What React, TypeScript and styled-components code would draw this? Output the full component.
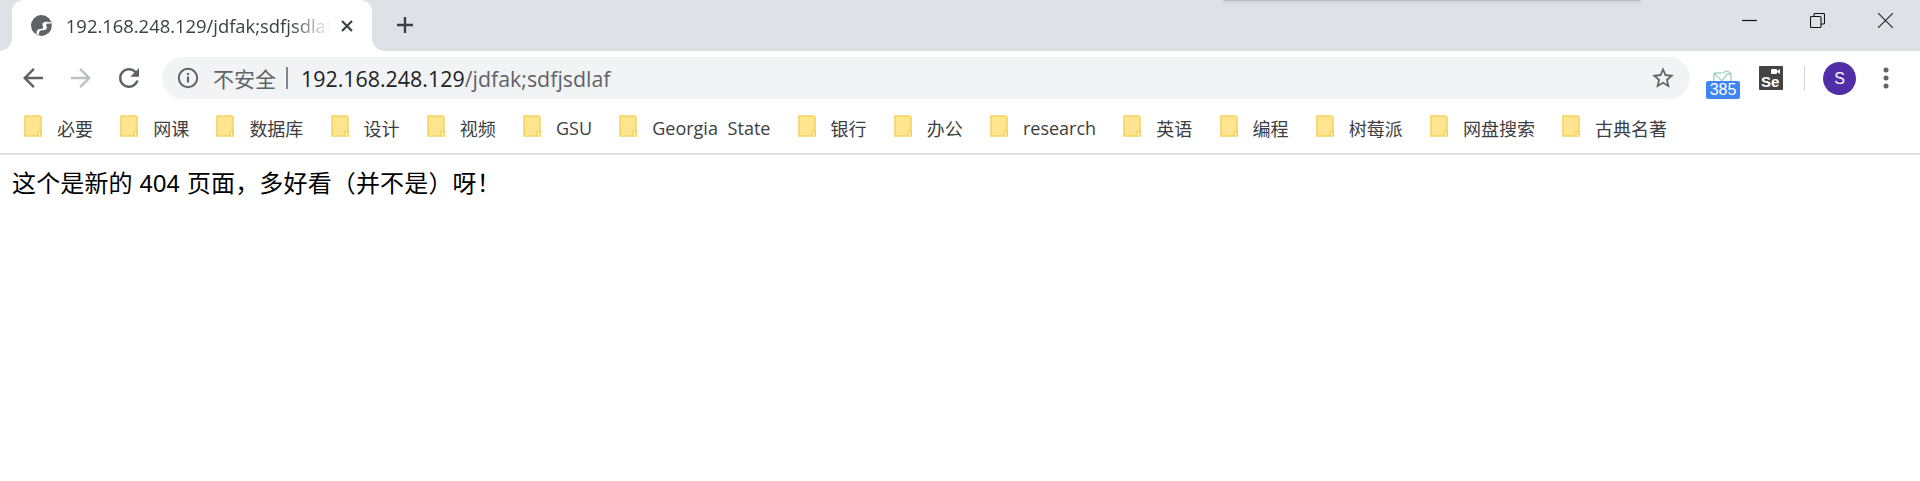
import styled, { createGlobalStyle } from "styled-components";

const GlobalStyle = createGlobalStyle`
  html, body {
    margin: 0;
    padding: 0;
    background: #fff;
  }
  body {
    font-family: "Open Sans", "Noto Sans CJK SC", sans-serif;
  }
`;

const marcadores = [
  "必要", "网课", "数据库", "设计", "视频", "GSU", "Georgia State", "银行", "办公",
  "research", "英语", "编程", "树莓派", "网盘搜索", "古典名著",
];

const Janela = styled.div`
  width: 1920px;
  height: 481px;
  overflow: hidden;
`;

const BarraTitulo = styled.div`
  position: relative;
  height: 51px;
  background: #dee1e6;
  display: flex;
  padding-left: 12px;
`;

const SombraJanela = styled.div`
  position: absolute;
  top: 0;
  left: 1224px;
  width: 416px;
  height: 1px;
  background: #b9bbc0;
  box-shadow: 0 0 4px 1px #c6c8cd;
`;

const Aba = styled.div`
  position: relative;
  width: 360px;
  height: 51px;
  background: #fff;
  border-radius: 12px 12px 0 0;
  display: flex;
  align-items: center;
  padding: 0 18px 0 19px;
  box-sizing: border-box;

  &::before,
  &::after {
    content: "";
    position: absolute;
    bottom: 0;
    width: 12px;
    height: 12px;
  }
  &::before {
    left: -12px;
    background: radial-gradient(circle at 0 0, #dee1e6 11.5px, #fff 12px);
  }
  &::after {
    right: -12px;
    background: radial-gradient(circle at 100% 0, #dee1e6 11.5px, #fff 12px);
  }
`;

const TituloAba = styled.span`
  margin-left: 14px;
  width: 268px;
  font-size: 18.4px;
  color: #3c4043;
  white-space: nowrap;
  overflow: hidden;
  -webkit-mask-image: linear-gradient(to right, #000 225px, transparent 264px);
  mask-image: linear-gradient(to right, #000 225px, transparent 264px);
`;

const FecharAba = styled.svg`
  margin-left: 8px;
  flex: none;
`;

const NovaAba = styled.svg`
  margin: 16px 0 0 24px;
  flex: none;
`;

const ControlesJanela = styled.div`
  margin-left: auto;
  display: flex;
  height: 41px;
  padding-right: 27px;
  gap: 53px;
  align-items: center;
`;

const BarraFerramentas = styled.div`
  height: 54px;
  background: #fff;
  display: flex;
  align-items: center;
  padding-left: 18px;
  gap: 18px;
`;

const BotaoNav = styled.svg`
  flex: none;
`;

const Endereco = styled.div`
  width: 1528px;
  height: 42px;
  border-radius: 21px;
  background: #f1f3f4;
  display: flex;
  align-items: center;
  padding: 0 14px 0 15px;
  box-sizing: border-box;
  flex: none;
`;

const NaoSeguro = styled.span`
  margin-left: 14px;
  font-size: 21px;
  color: #5f6368;
`;

const Separador = styled.span`
  width: 2px;
  height: 22px;
  margin: 0 13px 0 10px;
  background: #80868b;
`;

const Url = styled.span`
  font-size: 21.4px;
  color: #5f6368;
  white-space: nowrap;
`;

const Host = styled.span`
  color: #202124;
`;

const Estrela = styled.svg`
  margin-left: auto;
`;

const Extensoes = styled.div`
  display: flex;
  align-items: center;
  margin-left: -2px;
`;

const ExtensaoEmail = styled.div`
  width: 34px;
  height: 29px;
  margin-top: 12px;
  display: flex;
  flex-direction: column;
  align-items: center;
`;

const Contador = styled.span`
  width: 34px;
  height: 18px;
  border-radius: 2px;
  background: #3f85f4;
  color: #fff;
  font: 16px/18px "Liberation Sans", sans-serif;
  text-align: center;
`;

const ExtensaoSe = styled.div`
  position: relative;
  width: 24px;
  height: 24px;
  margin-left: 19px;
  background: #444;
  border-radius: 1px;
  color: #fff;
  font: bold 15px/17px "Liberation Sans", sans-serif;
  display: flex;
  align-items: flex-end;
  padding-left: 2px;
  box-sizing: border-box;
`;

const CameraSe = styled.svg`
  position: absolute;
  top: 3px;
  right: 3px;
`;

const Divisor = styled.div`
  width: 1px;
  height: 24px;
  margin: 0 18px 0 21px;
  background: #d3d5d8;
`;

const Avatar = styled.div`
  width: 33px;
  height: 33px;
  border-radius: 50%;
  background: #512da8;
  color: #fff;
  font: 16px/33px "Liberation Sans", sans-serif;
  text-align: center;
`;

const Pontos = styled.svg`
  margin-left: 27px;
`;

const BarraMarcadores = styled.div`
  height: 50px;
  display: flex;
  align-items: center;
  padding: 0 0 6px 24px;
  box-sizing: border-box;
  border-bottom: 2px solid #dfe1e4;
  gap: 27.2px;
`;

const Marcador = styled.div`
  display: flex;
  align-items: center;
  gap: 15px;
  font-size: 18px;
  color: #3c4043;
  white-space: nowrap;
  word-spacing: 5px;
`;

const NomeMarcador = styled.span`
  margin-top: 3px;
`;

const Mensagem = styled.p`
  margin: 0;
  padding: 13px 12px;
  font: 24px/32px "Liberation Sans", "Noto Sans CJK SC", sans-serif;
  letter-spacing: 0.15px;
  color: #000;
`;

function Pasta() {
  return (
    <svg width="18" height="22" viewBox="0 0 18 22">
      <path d="M1 1h14a2 2 0 0 1 2 2v18H1z" fill="#ffe58f" stroke="#f7d35f" strokeWidth="1.6" />
      <path d="M14 21v-3.5a1.5 1.5 0 0 1 3 0V21" fill="#fff4cc" stroke="#f3c94a" strokeWidth="1.2" />
    </svg>
  );
}

export default function App() {
  return (
    <Janela>
      <GlobalStyle />
      <BarraTitulo>
        <SombraJanela />
        <Aba>
          <svg width="21" height="21" viewBox="0 0 21 21">
            <circle cx="10.5" cy="10.5" r="10.5" fill="#5f6368" />
            <path d="M20 7c-3 0-6-1-8 1-1.500 1.500 1 3.500 0 5-1 1.600-4 .5-5.500 2-1 1-1 3-1 4l2.500 1c0-1.500 0-3 1-4 1.500-1.500 5 0 6.500-2 1.500-2-1-4 0-5 1.500-1 3-.5 5-.5z" fill="#fff" />
          </svg>
          <TituloAba>192.168.248.129/jdfak;sdfjsdlaf</TituloAba>
          <FecharAba width="14" height="14" viewBox="0 0 14 14">
            <path d="M2 2l10 10M12 2L2 12" stroke="#3c4043" strokeWidth="2.2" />
          </FecharAba>
        </Aba>
        <NovaAba width="18" height="18" viewBox="0 0 18 18">
          <path d="M9 1v16M1 9h16" stroke="#3c4043" strokeWidth="2.4" />
        </NovaAba>
        <ControlesJanela>
          <svg width="15" height="15" viewBox="0 0 15 15">
            <path d="M0 7.500h15" stroke="#111" strokeWidth="1.2" />
          </svg>
          <svg width="15" height="15" viewBox="0 0 15 15" fill="none" stroke="#111" strokeWidth="1.1">
            <rect x="0.5" y="3.500" width="10.500" height="11" rx="1" />
            <path d="M4 3.500V1.500a1 1 0 0 1 1-1h8.500a1 1 0 0 1 1 1V10a1 1 0 0 1-1 1H11" />
          </svg>
          <svg width="15" height="15" viewBox="0 0 15 15">
            <path d="M0 0l15 15M15 0L0 15" stroke="#222" strokeWidth="1.1" />
          </svg>
        </ControlesJanela>
      </BarraTitulo>

      <BarraFerramentas>
        <BotaoNav width="30" height="30" viewBox="0 0 24 24" fill="#5f6368">
          <path d="M20 11H7.830l5.590-5.590L12 4l-8 8 8 8 1.410-1.410L7.830 13H20v-2z" />
        </BotaoNav>
        <BotaoNav width="30" height="30" viewBox="0 0 24 24" fill="#bdc1c6">
          <path d="M12 4l-1.410 1.410L16.170 11H4v2h12.170l-5.580 5.590L12 20l8-8z" />
        </BotaoNav>
        <BotaoNav width="30" height="30" viewBox="0 0 24 24" fill="#5f6368">
          <path d="M17.650 6.350C16.200 4.900 14.210 4 12 4c-4.420 0-7.990 3.580-7.990 8s3.570 8 7.990 8c3.730 0 6.840-2.550 7.730-6h-2.080c-.82 2.330-3.040 4-5.650 4-3.310 0-6-2.690-6-6s2.690-6 6-6c1.660 0 3.140.69 4.220 1.780L13 11h7V4l-2.350 2.350z" />
        </BotaoNav>
        <Endereco>
          <svg width="22" height="22" viewBox="0 0 22 22">
            <circle cx="11" cy="11" r="9.200" fill="none" stroke="#5f6368" strokeWidth="2" />
            <path d="M11 9.500v6M11 6v2" stroke="#5f6368" strokeWidth="2.200" />
          </svg>
          <NaoSeguro>不安全</NaoSeguro>
          <Separador />
          <Url>
            <Host>192.168.248.129</Host>/jdfak;sdfjsdlaf
          </Url>
          <Estrela width="26" height="26" viewBox="0 0 24 24" fill="#5f6368">
            <path d="M22 9.240l-7.190-.62L12 2 9.190 8.630 2 9.240l5.460 4.730L5.820 21 12 17.270 18.180 21l-1.630-7.030L22 9.240zM12 15.400l-3.760 2.270 1-4.280-3.320-2.880 4.380-.38L12 6.100l1.710 4.040 4.380.38-3.320 2.880 1 4.280L12 15.400z" />
          </Estrela>
        </Endereco>
        <Extensoes>
          <ExtensaoEmail>
            <svg width="20" height="11" viewBox="0 0 20 11" fill="none" stroke="#a5d4bf" strokeWidth="1.400">
              <path d="M1 3l8 8 5-7 4 0v7M1 3v8M1 3h8M18 4c-2-3-5-4-8-1" />
            </svg>
            <Contador>385</Contador>
          </ExtensaoEmail>
          <ExtensaoSe>
            Se
            <CameraSe width="9" height="5" viewBox="0 0 9 5" fill="#fff">
              <rect width="6" height="5" rx="1" />
              <path d="M6 2l3-2v5L6 3z" />
            </CameraSe>
          </ExtensaoSe>
          <Divisor />
          <Avatar>S</Avatar>
          <Pontos width="6" height="22" viewBox="0 0 6 22" fill="#5f6368">
            <circle cx="3" cy="3" r="2.500" />
            <circle cx="3" cy="11" r="2.500" />
            <circle cx="3" cy="19" r="2.500" />
          </Pontos>
        </Extensoes>
      </BarraFerramentas>

      <BarraMarcadores>
        {marcadores.map((nome) => (
          <Marcador key={nome}>
            <Pasta />
            <NomeMarcador>{nome}</NomeMarcador>
          </Marcador>
        ))}
      </BarraMarcadores>

      <Mensagem>这个是新的 404 页面，多好看（并不是）呀！</Mensagem>
    </Janela>
  );
}
